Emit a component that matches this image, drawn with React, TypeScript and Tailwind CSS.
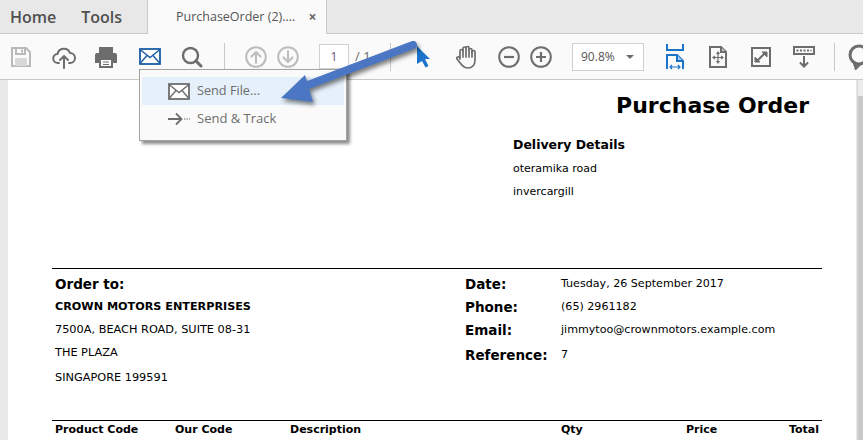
const GRAY = '#6d6d6d'

function Sep() {
  return <div className="w-px h-[28px] bg-[#c8c8c8]" />
}

function SaveIcon() {
  return (
    <svg width="22" height="22" viewBox="0 0 22 22" fill="none" stroke="#b9b9b9" strokeWidth="2">
      <path d="M2 2h14l4 4v14H2z" />
      <path d="M6 2v6h9V2M12 3.500v3" />
      <rect x="5" y="12" width="12" height="8" fill="#d8d8d8" stroke="none" />
    </svg>
  )
}

function UploadIcon() {
  return (
    <svg width="24" height="24" viewBox="0 0 24 24" fill="none" stroke={GRAY} strokeWidth="2" strokeLinecap="round" strokeLinejoin="round">
      <path d="M7 18H6a4.500 4.500 0 0 1-.5-9A6.500 6.500 0 0 1 18 8a5 5 0 0 1 0 10h-1" />
      <path d="M12 23V11M8 15l4-4 4 4" />
    </svg>
  )
}

function PrintIcon() {
  return (
    <svg width="24" height="22" viewBox="0 0 24 22" fill={GRAY}>
      <path d="M5 1h14v6H5z" />
      <path d="M3 7h18a2 2 0 0 1 2 2v8h-4v-4H5v4H1V9a2 2 0 0 1 2-2z" />
      <path d="M6 13h12v8H6z" fill="#fff" stroke={GRAY} strokeWidth="2" />
      <path d="M9 16h6M9 18.500h6" stroke={GRAY} strokeWidth="1" />
    </svg>
  )
}

function MailIcon({ color, w, h }: { color: string; w: number; h: number }) {
  return (
    <svg width={w} height={h} viewBox="0 0 22 17" fill="#fff" stroke={color} strokeWidth="1.800">
      <rect x="1" y="1" width="20" height="15" />
      <path d="M1 1.500l10 8 10-8M1 15.500l7-8M21 15.500l-7-8" fill="none" strokeWidth="1.400" />
    </svg>
  )
}

function SearchIcon() {
  return (
    <svg width="22" height="22" viewBox="0 0 22 22" fill="none" stroke={GRAY} strokeWidth="2.400" strokeLinecap="round">
      <circle cx="9.500" cy="9.500" r="7.500" />
      <path d="M15 15l5 5" strokeWidth="3" />
    </svg>
  )
}

function CircleArrow({ up }: { up: boolean }) {
  return (
    <svg width="22" height="22" viewBox="0 0 22 22" fill="none" stroke="#bdbdbd" strokeWidth="2" strokeLinecap="round" strokeLinejoin="round">
      <circle cx="11" cy="11" r="9.800" />
      <path d={up ? 'M11 17V6M6.500 10.500L11 6l4.500 4.500' : 'M11 5v11M6.500 11.500L11 16l4.500-4.500'} />
    </svg>
  )
}

function CursorIcon() {
  return (
    <svg width="14" height="22" viewBox="0 0 14 22" fill="#1b74c9">
      <path d="M0 0l13 13H8l3.500 7-3 1.500L5 15l-5 3z" />
    </svg>
  )
}

function HandIcon() {
  return (
    <svg width="24" height="24" viewBox="0 0 24 24" fill="none" stroke={GRAY} strokeWidth="1.700" strokeLinecap="round" strokeLinejoin="round">
      <path d="M6 13V6a1.500 1.500 0 0 1 3 0V3.500a1.500 1.500 0 0 1 3 0V3a1.500 1.500 0 0 1 3 0v2a1.500 1.500 0 0 1 3 0v2a1.500 1.500 0 0 1 3 0v8c0 5-3 8-7 8-3.500 0-5-1.500-7-4l-4-5c-1-1.500 1-3 2.500-1.500L6 14" />
      <path d="M9 6v6M12 4v8M15 4v8M18 6v6" />
    </svg>
  )
}

function ZoomCircle({ plus }: { plus: boolean }) {
  return (
    <svg width="22" height="22" viewBox="0 0 22 22" fill="none" stroke={GRAY} strokeWidth="2">
      <circle cx="11" cy="11" r="9.800" />
      <path d={plus ? 'M6 11h10M11 6v10' : 'M6 11h10'} strokeWidth="2.200" />
    </svg>
  )
}

function FitWidthIcon() {
  return (
    <svg width="18" height="26" viewBox="0 0 18 26" fill="none" stroke="#1b74c9" strokeWidth="2">
      <path d="M1 0v6h16V0" />
      <path d="M1 25V11h10l6 6v8" />
      <path d="M11 11v6h6" fill="#a9cdf0" />
      <path d="M4 23h10M6 21l-2 2 2 2M12 21l2 2-2 2" strokeWidth="1.200" />
    </svg>
  )
}

function FitPageIcon() {
  return (
    <svg width="18" height="22" viewBox="0 0 18 22" fill="none" stroke={GRAY} strokeWidth="2">
      <path d="M1 1h11l5 5v15H1z" />
      <path d="M12 1v5h5" fill="#c8c8c8" />
      <path d="M9 6v11M4 11.500h10M7.500 8L9 6l1.500 2M7.500 15L9 17l1.500-2M6 10l-2 1.500L6 13M12 10l2 1.500L12 13" strokeWidth="1.200" />
    </svg>
  )
}

function ExpandIcon() {
  return (
    <svg width="20" height="20" viewBox="0 0 20 20" fill="none" stroke={GRAY} strokeWidth="2">
      <rect x="1" y="1" width="18" height="18" />
      <path d="M11 5h5v5zM4 15v-5l5 5z" fill={GRAY} strokeWidth="1" />
      <path d="M13 7l-6 6" />
    </svg>
  )
}

function RulerIcon() {
  return (
    <svg width="22" height="22" viewBox="0 0 22 22" fill="none" stroke={GRAY}>
      <path d="M1 1h20v7H1z" strokeWidth="2" />
      <path d="M3.500 4.500h15" strokeWidth="2.200" strokeDasharray="2 1.500" />
      <path d="M11 10v11M7 16.500l4 4 4-4" strokeWidth="2" />
    </svg>
  )
}

function SpeechIcon() {
  return (
    <svg width="24" height="26" viewBox="0 0 24 26" fill="none" stroke={GRAY} strokeWidth="3">
      <circle cx="12" cy="11" r="9" />
      <path d="M7 18l2 6 4-4" />
    </svg>
  )
}

function Toolbar() {
  return (
    <div className="flex items-center h-[47px] bg-[#fafafa] border-b border-[#c9c9c9] border-t border-t-[#c9c9c9] overflow-hidden shrink-0 [&>*]:shrink-0">
      <div className="ml-[6px] w-[30px] flex justify-center"><SaveIcon /></div>
      <div className="ml-[13px] w-[30px] flex justify-center"><UploadIcon /></div>
      <div className="ml-[12px] w-[30px] flex justify-center"><PrintIcon /></div>
      <div className="ml-[14px] w-[30px] flex justify-center"><MailIcon color="#1a5da6" w={22} h={17} /></div>
      <div className="ml-[12px] w-[30px] flex justify-center"><SearchIcon /></div>
      <div className="ml-[17px]"><Sep /></div>
      <div className="ml-[16px] w-[30px] flex justify-center"><CircleArrow up /></div>
      <div className="ml-[2px] w-[30px] flex justify-center"><CircleArrow up={false} /></div>
      <div className="ml-[16px] w-[30px] h-[25px] bg-white border border-[#d0d0d0] flex items-center justify-center text-[12px] text-[#6a4f7a]">1</div>
      <div className="ml-[6px] w-[20px] text-[13px] text-[#6d6d6d] whitespace-nowrap">/ 1</div>
      <div className="ml-[15px]"><Sep /></div>
      <div className="ml-[26px] w-[14px]"><CursorIcon /></div>
      <div className="ml-[20px] w-[30px] flex justify-center"><HandIcon /></div>
      <div className="ml-[13px] w-[30px] flex justify-center"><ZoomCircle plus={false} /></div>
      <div className="ml-[2px] w-[30px] flex justify-center"><ZoomCircle plus /></div>
      <div className="ml-[16px] w-[72px] h-[28px] bg-white border border-[#d0d0d0] flex items-center justify-between pl-[8px] pr-[9px] text-[12px] text-[#555]">
        <span>90.8%</span>
        <span className="w-0 h-0 border-x-[4px] border-x-transparent border-t-[4px] border-t-[#6d6d6d]" />
      </div>
      <div className="ml-[16px] w-[30px] flex justify-center"><FitWidthIcon /></div>
      <div className="ml-[13px] w-[30px] flex justify-center"><FitPageIcon /></div>
      <div className="ml-[13px] w-[30px] flex justify-center"><ExpandIcon /></div>
      <div className="ml-[13px] w-[30px] flex justify-center"><RulerIcon /></div>
      <div className="ml-[15px]"><Sep /></div>
      <div className="ml-[12px] w-[24px]"><SpeechIcon /></div>
    </div>
  )
}

function InfoRow({ label, value, cls }: { label: string; value: string; cls: string }) {
  return (
    <div className={`flex items-center ${cls}`}>
      <div className="w-[96px] text-[13.5px] font-bold text-black">{label}</div>
      <div className="text-[11.1px] text-black">{value}</div>
    </div>
  )
}

export default function App() {
  return (
    <div className="relative w-[863px] h-[440px] overflow-hidden bg-[#e8e8e8] flex flex-col font-['Liberation_Sans',sans-serif]">
      {/* tab strip */}
      <div className="flex h-[33px] shrink-0 bg-[#e8e8e8] font-['Open_Sans',sans-serif]">
        <div className="w-[148px] flex items-center text-[16px] font-semibold text-[#505050] border-r border-[#c9c9c9]">
          <span className="ml-[10px]">Home</span>
          <span className="ml-[25px]">Tools</span>
        </div>
        <div className="w-[179px] bg-[#fafafa] flex items-center text-[12.5px] text-[#555] border-r border-[#c9c9c9] -mb-px z-10">
          <span className="ml-[28px]">PurchaseOrder (2)....</span>
          <span className="ml-[13px] text-[14px] font-bold leading-none text-[#666]">×</span>
        </div>
      </div>

      <div className="font-['Open_Sans',sans-serif]">
        <Toolbar />
      </div>

      {/* document view */}
      <div className="flex flex-1 min-h-0">
        <div className="ml-[8px] w-[848px] bg-white font-['DejaVu_Sans',sans-serif] text-black">
          <div className="flex justify-end pr-[47px] pt-[11px]">
            <h1 className="text-[22px] leading-[30px] font-bold">Purchase Order</h1>
          </div>
          <div className="ml-[505px] mt-[15px] h-[132px]">
            <div className="text-[12.5px] leading-[18px] font-bold">Delivery Details</div>
            <div className="mt-[7px] text-[11px] leading-[15px]">oteramika road</div>
            <div className="mt-[8px] text-[11px] leading-[15px]">invercargill</div>
          </div>

          <div className="ml-[44px] w-[770px] border-t border-black h-[152px] flex">
            <div className="w-[413px] pl-[3px] pt-[6px]">
              <div className="text-[13.5px] leading-[18px] font-bold">Order to:</div>
              <div className="mt-[6px] text-[11.2px] leading-[15px] font-bold">CROWN MOTORS ENTERPRISES</div>
              <div className="mt-[8px] text-[11.3px] leading-[15px]">7500A, BEACH ROAD, SUITE 08-31</div>
              <div className="mt-[8px] text-[11.3px] leading-[15px]">THE PLAZA</div>
              <div className="mt-[10px] text-[11.3px] leading-[15px]">SINGAPORE 199591</div>
            </div>
            <div className="pt-[6px]">
              <InfoRow label="Date:" value="Tuesday, 26 September 2017" cls="h-[18px]" />
              <InfoRow label="Phone:" value="(65) 2961182" cls="h-[18px] mt-[5px]" />
              <InfoRow label="Email:" value="jimmytoo@crownmotors.example.com" cls="h-[18px] mt-[5px]" />
              <InfoRow label="Reference:" value="7" cls="h-[18px] mt-[7px]" />
            </div>
          </div>

          <div className="ml-[44px] w-[770px] border-t border-black pt-px flex text-[11px] leading-[15px] font-bold">
            <div className="ml-[3px] w-[120px]">Product Code</div>
            <div className="w-[115px]">Our Code</div>
            <div className="w-[271px]">Description</div>
            <div className="w-[125px]">Qty</div>
            <div className="w-[60px]">Price</div>
            <div className="w-[73px] text-right">Total</div>
          </div>
        </div>
        <div className="ml-px w-[6px] flex flex-col border-l border-[#d8d8d8]">
          <div className="h-[16px] bg-[#ececec]" />
          <div className="flex-1 bg-[#c8c8c8]" />
        </div>
      </div>

      {/* send menu */}
      <div className="absolute left-[139px] top-[69px] w-[208px] h-[72px] bg-[#fafafa] border border-[#a3a3a3] shadow-[3px_3px_3px_rgba(0,0,0,0.45)] pt-[7px] px-[2px] font-['Open_Sans',sans-serif] text-[13px] text-[#6d6d6d]">
        <div className="h-[28px] bg-[#e5f0fa] flex items-center pl-[26px] gap-[7px]">
          <MailIcon color="#6d6d6d" w={22} h={17} />
          <span className="text-[12.7px]">Send File...</span>
        </div>
        <div className="h-[28px] flex items-center pl-[26px] gap-[7px]">
          <svg width="22" height="14" viewBox="0 0 22 14" fill="none" stroke="#6d6d6d" strokeWidth="1.800">
            <path d="M0 7h13M8 1.500L13.500 7 8 12.500" />
            <path d="M16 7h6" strokeWidth="1" strokeDasharray="1.500 1" />
          </svg>
          <span>Send &amp; Track</span>
        </div>
      </div>

      {/* callout arrow over the toolbar and menu */}
      <svg className="absolute left-[270px] top-[35px] drop-shadow-[2px_3px_2px_rgba(0,0,0,0.5)]" width="155" height="75" viewBox="0 0 155 75">
        <path d="M143 10L38 50" stroke="#4a76c4" strokeWidth="8" strokeLinecap="round" />
        <path d="M11 63L35 40 43 67z" fill="#4a76c4" />
      </svg>
    </div>
  )
}
